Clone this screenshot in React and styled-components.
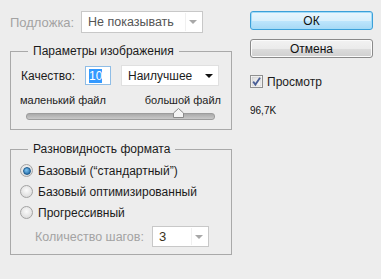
import React from "react";
import styled, { createGlobalStyle } from "styled-components";

const GlobalStyle = createGlobalStyle`
  html, body {
    margin: 0;
    padding: 0;
    background: #ededed;
  }
  body {
    font-family: "Liberation Sans", Arial, sans-serif;
    font-size: 12px;
    color: #1b1b1b;
  }
`;

const Dialog = styled.div`
  width: 381px;
  height: 279px;
  display: flex;
  background: #ededed;
`;

const LeftColumn = styled.div`
  width: 222px;
  margin-left: 10px;
  padding-top: 11px;
  display: flex;
  flex-direction: column;
`;

const RightColumn = styled.div`
  width: 123px;
  margin-left: 18px;
  padding-top: 11px;
  display: flex;
  flex-direction: column;
`;

const Row = styled.div`
  display: flex;
  align-items: center;
  height: ${(p) => p.$h || 21}px;
  margin-top: ${(p) => p.$mt || 0}px;
  padding-left: ${(p) => p.$pl || 0}px;
`;

const Label = styled.span`
  color: ${(p) => (p.$disabled ? "#a3a3a3" : "#1b1b1b")};
  font-size: ${(p) => p.$fs || 12}px;
  width: ${(p) => (p.$w ? `${p.$w}px` : "auto")};
  white-space: nowrap;
`;

const Select = styled.div`
  position: relative;
  box-sizing: border-box;
  width: ${(p) => p.$w}px;
  height: ${(p) => p.$h || 21}px;
  margin-left: ${(p) => p.$ml || 0}px;
  background: #fff;
  border: 1px solid ${(p) => (p.$disabled ? "#c8c8c8" : "#e0e0e0")};
  display: flex;
  align-items: center;
  padding-left: 6px;
  font-size: ${(p) => p.$fs || 12}px;
  color: ${(p) => p.$color || "#1b1b1b"};
  ${(p) =>
    p.$disabled &&
    `
    &::before {
      content: "";
      position: absolute;
      top: 1px;
      bottom: 1px;
      right: 16px;
      width: 1px;
      background: #f0f0f0;
    }
  `}
`;

const Arrow = styled.span`
  position: absolute;
  right: ${(p) => p.$r || 7}px;
  top: 50%;
  margin-top: -2px;
  width: 0;
  height: 0;
  border-left: 4px solid transparent;
  border-right: 4px solid transparent;
  border-top: 4px solid ${(p) => (p.$disabled ? "#a8a8a8" : "#111")};
`;

const Group = styled.fieldset`
  margin: ${(p) => p.$mt || 0}px 0 0 0;
  padding: 0 0 ${(p) => p.$pb || 0}px 0;
  border: 1px solid #a9a9a9;
  min-width: 0;
`;

const Legend = styled.legend`
  margin-left: 17px;
  padding: 0 5px;
  line-height: 14px;
  font-size: 12px;
  color: #1b1b1b;
`;

const SpinBox = styled.div`
  box-sizing: border-box;
  width: 26px;
  height: 19px;
  margin-left: 9px;
  background: #fff;
  border: 1px solid #8fbde6;
  display: flex;
  align-items: center;
  padding-left: 3px;
`;

const Selected = styled.span`
  background: #3399ff;
  color: #fff;
  line-height: 14px;
`;

const SliderLabels = styled.div`
  display: flex;
  justify-content: space-between;
  margin: 8px 10px 0 9px;
  font-size: 11px;
  line-height: 12px;
  color: #222;
`;

const SliderTrack = styled.div`
  position: relative;
  margin: 7px 16px 0 15px;
  height: 5px;
  border-radius: 3px;
  background: linear-gradient(#a9a9a9, #c9c9c9);
  border: 1px solid #9c9c9c;
`;

const Thumb = styled.svg`
  position: absolute;
  left: ${(p) => p.$x}px;
  top: -6px;
`;

const RadioRow = styled.label`
  display: flex;
  align-items: center;
  height: 21px;
  padding-left: 9px;
  gap: 5px;
`;

const RadioDot = styled.span`
  box-sizing: border-box;
  width: 13px;
  height: 13px;
  border-radius: 50%;
  border: 1px solid #a3a3a3;
  background: radial-gradient(circle at 50% 40%, #fbfbfb, #d4d4d4);
  display: flex;
  align-items: center;
  justify-content: center;
  &::after {
    content: "";
    display: ${(p) => (p.$checked ? "block" : "none")};
    width: 6px;
    height: 6px;
    border-radius: 50%;
    background: radial-gradient(circle at 40% 35%, #7ec6f3, #145a9a);
    border: 1px solid #1d5a8c;
  }
`;

const Button = styled.button`
  box-sizing: border-box;
  width: 123px;
  height: 19px;
  margin-top: ${(p) => p.$mt || 0}px;
  padding: 0;
  font-family: inherit;
  font-size: 12px;
  color: #111;
  border-radius: 3px;
  border: 1px solid ${(p) => (p.$primary ? "#3ca0d9" : "#8a8a8a")};
  background: ${(p) =>
    p.$primary
      ? "linear-gradient(#eaf6fd 0%, #d9f0fc 50%, #bee6fd 51%, #a7d9f5 100%)"
      : "linear-gradient(#f2f2f2 0%, #ebebeb 50%, #dddddd 51%, #cfcfcf 100%)"};
  box-shadow: inset 0 0 0 1px ${(p) => (p.$primary ? "#a3dcf8" : "#fbfbfb")};
`;

const CheckRow = styled.label`
  display: flex;
  align-items: center;
  gap: 4px;
  margin-top: 17px;
  height: 13px;
  font-size: 12px;
`;

const FileSize = styled.div`
  margin-top: 17px;
  font-size: 10px;
  line-height: 12px;
  color: #111;
`;

const CheckBox = () => (
  <svg width="13" height="13" viewBox="0 0 13 13">
    <defs>
      <linearGradient id="cbg" x1="0" y1="0" x2="1" y2="1">
        <stop offset="0" stopColor="#dcdcdc" />
        <stop offset="1" stopColor="#fbfbfb" />
      </linearGradient>
    </defs>
    <rect x="0.5" y="0.5" width="12" height="12" fill="#fff" stroke="#8e8f8f" />
    <rect x="2" y="2" width="9" height="9" fill="url(#cbg)" stroke="#c4c4c4" strokeWidth="0.6" />
    <path d="M3.2 6.6 L5.4 9.6 L10 2.8" fill="none" stroke="#4a5f97" strokeWidth="1.8" />
  </svg>
);

export default function App() {
  return (
    <Dialog>
      <GlobalStyle />
      <LeftColumn>
        <Row $h={22}>
          <Label $disabled $fs={13} $w={71}>Подложка:</Label>
          <Select $w={122} $h={22} $fs={12.5} $color="#555" $disabled>
            Не показывать
            <Arrow $r={5} $disabled />
          </Select>
        </Row>

        <Group $mt={11} $pb={9}>
          <Legend>Параметры изображения</Legend>
          <Row $mt={7} $pl={10}>
            <Label $w={55}>Качество:</Label>
            <SpinBox>
              <Selected>10</Selected>
            </SpinBox>
            <Select $w={98} $ml={10}>
              Наилучшее
              <Arrow $r={5} />
            </Select>
          </Row>
          <SliderLabels>
            <span>маленький файл</span>
            <span>большой файл</span>
          </SliderLabels>
          <SliderTrack>
            <Thumb $x={146} width="11" height="10" viewBox="0 0 11 10">
              <path d="M0.5 9.5 L0.5 5 L5.5 0.5 L10.5 5 L10.5 9.5 Z" fill="#f4f4f4" stroke="#8a8a8a" />
            </Thumb>
          </SliderTrack>
        </Group>

        <Group $mt={12} $pb={7}>
          <Legend>Разновидность формата</Legend>
          <div style={{ height: 4 }} />
          <RadioRow>
            <RadioDot $checked />
            Базовый (“стандартный”)
          </RadioRow>
          <RadioRow>
            <RadioDot />
            Базовый оптимизированный
          </RadioRow>
          <RadioRow>
            <RadioDot />
            Прогрессивный
          </RadioRow>
          <Row $mt={3} $pl={24}>
            <Label $disabled $fs={12.5} $w={117}>Количество шагов:</Label>
            <Select $w={57} $fs={13} $color="#3a3020" $disabled>
              3
              <Arrow $r={5} $disabled />
            </Select>
          </Row>
        </Group>
      </LeftColumn>

      <RightColumn>
        <Button $primary>ОК</Button>
        <Button $mt={9}>Отмена</Button>
        <CheckRow>
          <CheckBox />
          Просмотр
        </CheckRow>
        <FileSize>96,7K</FileSize>
      </RightColumn>
    </Dialog>
  );
}
